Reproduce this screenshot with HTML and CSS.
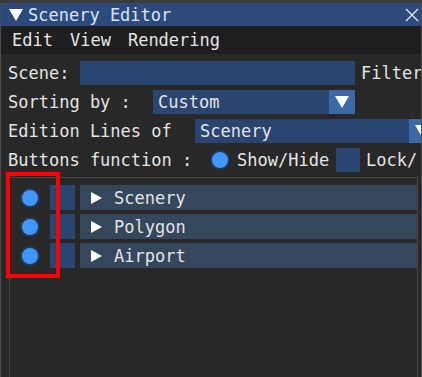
FILE: index.html
```html
<!DOCTYPE html>
<html lang="en">
<head>
  <meta charset="UTF-8">
  <meta name="viewport" content="width=device-width, initial-scale=1.0">
  <title>Scenery Editor</title>
  <link rel="stylesheet" href="styles.css">
</head>
<body>

  <div class="window">
    <div class="title-bar">
      <svg class="collapse" width="14" height="12" viewBox="0 0 14 12"><path d="M0 0 H14 L7 12 Z" fill="#ffffff"/></svg>
      <span class="title">Scenery Editor</span>
      <svg class="close" width="14" height="14" viewBox="0 0 14 14"><path d="M1 1 L13 13 M13 1 L1 13" stroke="#dfe6f2" stroke-width="1.4"/></svg>
    </div>

    <div class="menu-bar">
      <span>Edit</span>
      <span>View</span>
      <span>Rendering</span>
    </div>

    <div class="content">
      <div class="row">
        <span class="label label-scene">Scene:</span>
        <div class="frame input-scene"></div>
        <span class="label">Filter</span>
      </div>

      <div class="row">
        <span class="label label-sort">Sorting by :</span>
        <div class="frame combo combo-sort">
          <span class="combo-text">Custom</span>
          <span class="combo-arrow"><svg width="14" height="12" viewBox="0 0 14 12"><path d="M0 0 H14 L7 12 Z" fill="#ffffff"/></svg></span>
        </div>
      </div>

      <div class="row">
        <span class="label label-lines">Edition Lines of</span>
        <div class="frame combo combo-lines">
          <span class="combo-text">Scenery</span>
          <span class="combo-arrow"><svg width="14" height="12" viewBox="0 0 14 12"><path d="M0 0 H14 L7 12 Z" fill="#ffffff"/></svg></span>
        </div>
      </div>

      <div class="row">
        <span class="label label-buttons">Buttons function :</span>
        <span class="radio"></span>
        <span class="label label-show">Show/Hide</span>
        <span class="frame checkbox"></span>
        <span class="label">Lock/</span>
      </div>

      <div class="child">
        <div class="item">
          <span class="radio-slot"><span class="radio"></span></span>
          <span class="frame checkbox small"></span>
          <div class="header"><svg class="arrow" width="11" height="12" viewBox="0 0 11 12"><path d="M0 0 L11 6 L0 12 Z" fill="#ffffff"/></svg>Scenery</div>
        </div>
        <div class="item">
          <span class="radio-slot"><span class="radio"></span></span>
          <span class="frame checkbox small"></span>
          <div class="header"><svg class="arrow" width="11" height="12" viewBox="0 0 11 12"><path d="M0 0 L11 6 L0 12 Z" fill="#ffffff"/></svg>Polygon</div>
        </div>
        <div class="item">
          <span class="radio-slot"><span class="radio"></span></span>
          <span class="frame checkbox small"></span>
          <div class="header"><svg class="arrow" width="11" height="12" viewBox="0 0 11 12"><path d="M0 0 L11 6 L0 12 Z" fill="#ffffff"/></svg>Airport</div>
        </div>
      </div>
    </div>

    <div class="highlight"></div>
  </div>

</body>
</html>
```

FILE: styles.css
```css
body {
  margin: 0;
  background-color: #3b3b3b;
  font-family: "DejaVu Sans Mono", "Liberation Mono", monospace;
  font-size: 17px;
  color: #e4e4e4;
  overflow: hidden;
}

.window {
  position: relative;
  margin-top: 3px;
  height: 374px;
  background-color: #282828;
  border-left: 1px solid #4c4c4c;
  border-right: 1px solid #4c4c4c;
  overflow: hidden;
}

.title-bar {
  display: flex;
  align-items: center;
  height: 23px;
  background-color: #2d4a7c;
  color: #dce4f4;
}

.collapse {
  margin-left: 8px;
  margin-right: 5px;
  flex-shrink: 0;
}

.title {
  flex: 1;
}

.close {
  margin-right: 2px;
}

.menu-bar {
  display: flex;
  gap: 17px;
  align-items: center;
  height: 28px;
  padding-left: 11px;
  background-color: #1e1e1e;
}

.content {
  padding: 7px 0 0 7px;
}

.row {
  display: flex;
  align-items: center;
  height: 24px;
  margin-bottom: 5px;
  white-space: nowrap;
}

.row > * {
  flex-shrink: 0;
}

.label-scene { width: 72px; }
.label-sort { width: 145px; }
.label-lines { width: 187px; }
.label-buttons { width: 202px; }
.label-show { width: 99px; margin-left: 7px; }

.frame {
  background-color: #294570;
}

.input-scene {
  width: 275px;
  height: 24px;
  margin-right: 6px;
}

.combo {
  display: flex;
  align-items: center;
  height: 24px;
}

.combo-text {
  flex: 1;
  padding-left: 5px;
}

.combo-arrow {
  display: flex;
  align-items: center;
  justify-content: center;
  width: 26px;
  height: 24px;
  background-color: #3b69a5;
}

.combo-sort { width: 202px; }
.combo-lines { width: 240px; }

.radio {
  display: inline-block;
  width: 16px;
  height: 16px;
  border-radius: 50%;
  background-color: #4296fa;
  border: 2px solid #1f3a60;
}

.checkbox {
  display: inline-block;
  width: 24px;
  height: 24px;
  margin-right: 6px;
}

.child {
  margin-top: 0;
  margin-left: 1px;
  margin-right: 3px;
  height: 200px;
  border: 1px solid #474747;
  border-bottom: none;
  padding-top: 7px;
}

.item {
  display: flex;
  align-items: center;
  height: 25px;
  margin-bottom: 4px;
}

.radio-slot {
  display: flex;
  justify-content: center;
  width: 39px;
}

.checkbox.small {
  width: 25px;
  height: 25px;
  margin-left: 1px;
  margin-right: 5px;
}

.header {
  flex: 1;
  display: flex;
  align-items: center;
  height: 25px;
  background-color: #35475c;
}

.arrow {
  margin-left: 11px;
  margin-right: 12px;
  flex-shrink: 0;
}

.highlight {
  position: absolute;
  left: 5px;
  top: 169px;
  width: 46px;
  height: 98px;
  border: 4px solid #f00;
}
```
